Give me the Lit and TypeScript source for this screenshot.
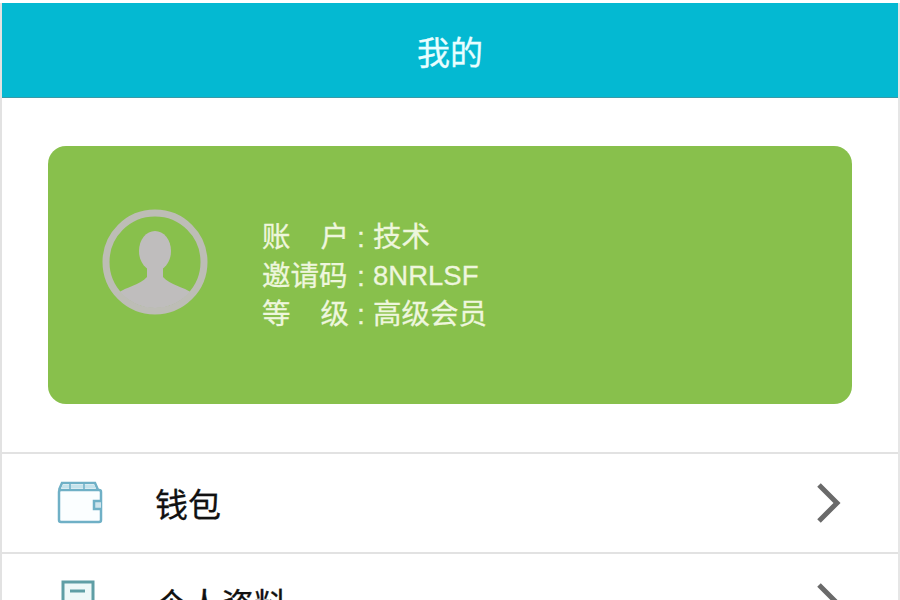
import { LitElement, html, css, svg } from "lit";
import { customElement } from "lit/decorators.js";

const wallet = svg`<svg class="ico" viewBox="0 0 46 46" width="46" height="46" fill="none" stroke="#6fb0c6" stroke-width="2.5"><path d="M2 10 L5 3 H38 L41 10"/><path d="M5 6.5 H38" stroke="#c4e3ec" stroke-width="3"/><path d="M13 3 V9 M27 3 V9" stroke-width="1.5"/><rect x="2" y="10" width="42" height="32" rx="2" fill="#fbfeff"/><path d="M44 21 H37 V29 H44" fill="#cfe4ec"/></svg>`;
const doc = svg`<svg class="ico" viewBox="0 0 46 46" width="46" height="46" fill="none" stroke="#5f9ea5" stroke-width="3"><rect x="6" y="2" width="30" height="40" fill="#eef8f8"/><path d="M13 11 H28"/></svg>`;
const chev = svg`<svg class="chev" viewBox="0 0 26 44" width="26" height="44" fill="none" stroke="#6a6a6a" stroke-width="5"><path d="M3 4 L21 22 L3 40"/></svg>`;

@customElement("app-root")
export class AppRoot extends LitElement {
  static styles = css`
    :host { display: block; width: 900px; height: 600px; overflow: hidden; background: #fff;
      font-family: "Liberation Sans", "Noto Sans CJK SC", sans-serif; }
    .page { border-left: 2px solid #e2e2e2; border-right: 2px solid #e6e6e6; height: 600px; box-sizing: border-box; }
    .bar { height: 95px; margin-top: 3px; background: #04b9d2; border-bottom: 1px solid #3a9aa8; box-sizing: border-box;
      display: flex; align-items: center; justify-content: center; color: #e9feff; font-size: 33px; -webkit-text-stroke: 0.3px #e9feff; }
    .bar span { transform: translateY(1px); }
    .card { margin: 48px 46px 0; height: 258px; background: #88c04c; border-radius: 18px;
      display: flex; align-items: center; padding-left: 54px; gap: 54px; box-sizing: border-box; }
    .avatar { flex: none; transform: translateY(-13px); }
    .info { display: grid; grid-template-columns: 87px 24px auto; color: #eef6dd; font-size: 28.5px; line-height: 38.5px; white-space: nowrap; transform: translateY(1px); -webkit-text-stroke: 0.3px #eef6dd; }
    .lbl { display: flex; justify-content: space-between; }
    .colon { text-align: center; }
    .code { font-size: 27.5px; }
    .row { height: 100px; border-top: 2px solid #e2e2e2; box-sizing: border-box; display: flex; align-items: center; padding-left: 55px; padding-right: 56px; color: #111; font-size: 33px; }
    .rows { margin-top: 48px; }
    .ico { flex: none; }
    .name { margin-left: 52px; flex: 1; -webkit-text-stroke: 0.3px #111; }
    .chev { flex: none; }
  `;

  render() {
    return html`<div class="page">
      <div class="bar"><span>我的</span></div>
      <div class="card">
        <svg class="avatar" viewBox="0 0 106 106" width="106" height="106">
          <circle cx="53" cy="53" r="49" fill="none" stroke="#bdbdb6" stroke-width="7"/>
          <clipPath id="c"><circle cx="53" cy="53" r="46"/></clipPath>
          <g clip-path="url(#c)" fill="#bfbdbd">
            <ellipse cx="53" cy="42" rx="16" ry="20"/>
            <path d="M45 56 H61 V68 C68 76 82 78 90 84 V106 H16 V84 C24 78 38 76 45 68 Z"/>
          </g>
        </svg>
        <div class="info">
          <div class="lbl"><span>账</span><span>户</span></div><div class="colon">:</div><div>技术</div>
          <div class="lbl"><span>邀请码</span></div><div class="colon">:</div><div class="code">8NRLSF</div>
          <div class="lbl"><span>等</span><span>级</span></div><div class="colon">:</div><div>高级会员</div>
        </div>
      </div>
      <div class="rows">
        <div class="row">${wallet}<div class="name">钱包</div>${chev}</div>
        <div class="row">${doc}<div class="name">个人资料</div>${chev}</div>
      </div>
    </div>`;
  }
}
